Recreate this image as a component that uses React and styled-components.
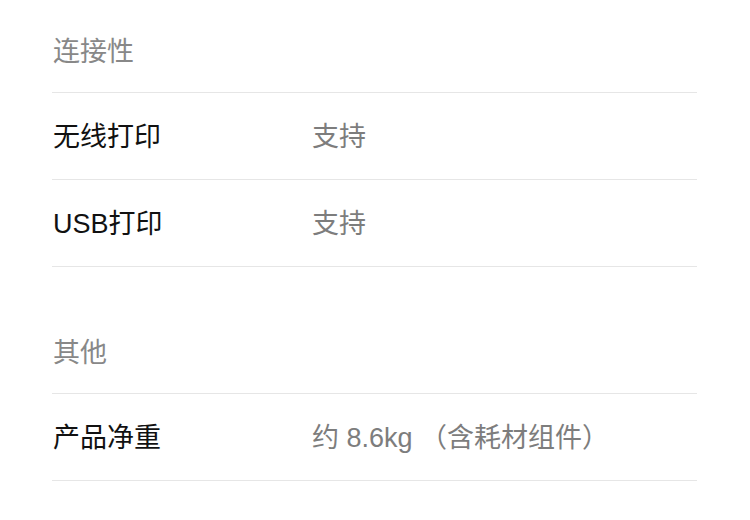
import React from 'react'
import styled, { createGlobalStyle } from 'styled-components'

const GlobalStyle = createGlobalStyle`
  html, body {
    margin: 0;
    padding: 0;
    background: #fff;
  }
  body {
    font-family: "Liberation Sans", "Noto Sans CJK SC", sans-serif;
  }
`

const Page = styled.div`
  width: 750px;
  padding: 6px 53px 0 52px;
  box-sizing: border-box;
`

const Section = styled.section`
  & + & {
    margin-top: 40px;
  }
`

const SectionTitle = styled.div`
  height: 86px;
  display: flex;
  align-items: center;
  font-size: 27px;
  color: #888;
  border-bottom: 1.5px solid #e6e6e6;
  padding-left: 1px;
`

const Row = styled.div`
  height: 87px;
  display: grid;
  grid-template-columns: 259px 1fr;
  align-items: center;
  border-bottom: 1.5px solid #e6e6e6;
  padding-left: 1px;
  padding-bottom: 4px;
  box-sizing: border-box;
`

const Label = styled.div`
  font-size: 27px;
  color: #111;
`

const Value = styled.div`
  font-size: 27px;
  color: #7d7d7d;
`

const sections = [
  {
    title: '连接性',
    rows: [
      { label: '无线打印', value: '支持' },
      { label: 'USB打印', value: '支持' },
    ],
  },
  {
    title: '其他',
    rows: [{ label: '产品净重', value: '约 8.6kg （含耗材组件）' }],
  },
]

const App = () => {
  return (
    <>
      <GlobalStyle />
      <Page>
        {sections.map((s) => (
          <Section key={s.title}>
            <SectionTitle>{s.title}</SectionTitle>
            {s.rows.map((r) => (
              <Row key={r.label}>
                <Label>{r.label}</Label>
                <Value>{r.value}</Value>
              </Row>
            ))}
          </Section>
        ))}
      </Page>
    </>
  )
}

export default App
